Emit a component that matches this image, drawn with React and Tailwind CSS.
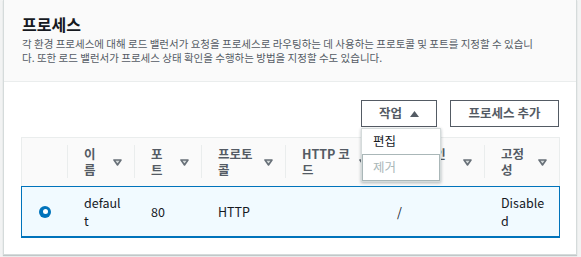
const font = { fontFamily: '"Noto Sans CJK KR", "Noto Sans", sans-serif' };

function SortIcon() {
  return (
    <svg width="9" height="7" viewBox="0 0 9 7" className="shrink-0">
      <polygon points="1,1 8,1 4.5,6" fill="#d5dbdb" stroke="#687078" strokeWidth="1.6" strokeLinejoin="round" />
    </svg>
  );
}

function HeadCell({ children, divider = true }) {
  return (
    <div className="relative flex items-center pl-[17px] pr-[12px]">
      {divider && <div className="absolute left-0 top-[7px] bottom-[8px] w-px bg-[#eaeded]" />}
      <div className="mr-[6px] min-w-0 flex-1 whitespace-nowrap text-[12.5px] font-bold leading-[16px] text-[#545b64]">{children}</div>
      <SortIcon />
    </div>
  );
}

function Cell({ children }) {
  return <div className="flex items-center whitespace-nowrap pl-[17px] pr-[10px] text-[12.5px] leading-[18px] text-[#16191f]">{children}</div>;
}

export default function App() {
  return (
    <div className="h-[257px] w-[581px] bg-[#f2f3f3] pl-[3px] pr-[4px]" style={font}>
      <div className="h-[255px] w-[574px] border-x border-b border-[#d5dbdb] bg-white shadow-[0_1px_1px_rgba(0,28,36,0.2)]">
        <div className="h-[82px] border-b border-[#eaeded] bg-[#fafafa] pl-[18px] pt-[13px]">
          <h2 className="text-[16px] font-bold leading-[22px] text-[#16191f]">프로세스</h2>
          <div className="mt-[2px] text-[10.5px] leading-[14px] text-[#545b64]">
            <div className="whitespace-nowrap">각 환경 프로세스에 대해 로드 밸런서가 요청을 프로세스로 라우팅하는 데 사용하는 프로토콜 및 포트를 지정할 수 있습니</div>
            <div className="whitespace-nowrap">다. 또한 로드 밸런서가 프로세스 상태 확인을 수행하는 방법을 지정할 수도 있습니다.</div>
          </div>
        </div>

        <div className="pl-[17px] pr-[16px] pt-[18px]">
          <div className="flex justify-end gap-[13px] pr-[1px]">
            <div className="relative">
              <button className="flex h-[27px] w-[76px] items-center justify-center gap-[8px] border border-[#545b64] bg-white text-[12.5px] font-bold text-[#545b64]">
                작업
                <svg width="9" height="6" viewBox="0 0 9 6"><polygon points="0,6 9,6 4.5,0" fill="#545b64" /></svg>
              </button>
              <div className="absolute left-0 top-[28px] z-10 w-[80px] border border-[#d5dbdb] bg-white shadow-[0_1px_3px_rgba(0,28,36,0.3)]">
                <div className="flex h-[25px] items-center pl-[11px] text-[12.5px] text-[#16191f]">편집</div>
                <div className="flex h-[27px] items-center border border-[#aab7b8] pl-[10px] text-[12.5px] text-[#aab7b8]">제거</div>
              </div>
            </div>
            <button className="h-[27px] w-[109px] border border-[#545b64] bg-white text-[12.5px] font-bold text-[#545b64]">프로세스 추가</button>
          </div>

          <div className="mt-[10px] w-[539px]">
            <div className="grid h-[49px] grid-cols-[45px_67px_67px_84px_95px_104px_1fr] border-x border-t border-[#eaeded] bg-[#fafafa]">
              <div />
              <HeadCell>이<br />름</HeadCell>
              <HeadCell>포<br />트</HeadCell>
              <HeadCell>프로토<br />콜</HeadCell>
              <HeadCell>HTTP 코<br />드</HeadCell>
              <HeadCell>상태 확인<br />경로</HeadCell>
              <HeadCell>고정<br />성</HeadCell>
            </div>
            <div className="grid h-[52px] grid-cols-[45px_67px_67px_84px_95px_104px_1fr] border border-b-2 border-[#0073bb] bg-[#f1faff]">
              <div className="flex items-center justify-center pl-[1px]">
                <div className="flex h-[12px] w-[12px] items-center justify-center rounded-full bg-[#0073bb]">
                  <div className="h-[5px] w-[5px] rounded-full bg-white" />
                </div>
              </div>
              <Cell>defaul<br />t</Cell>
              <Cell>80</Cell>
              <Cell>HTTP</Cell>
              <Cell></Cell>
              <Cell>/</Cell>
              <Cell>Disable<br />d</Cell>
            </div>
          </div>
        </div>
      </div>
    </div>
  );
}
